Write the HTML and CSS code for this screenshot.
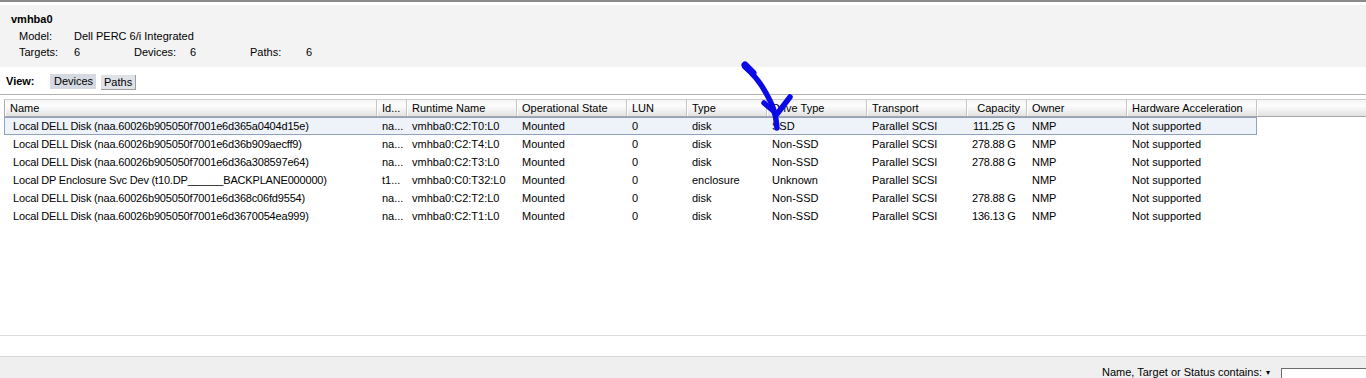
FILE: index.html
```html
<!DOCTYPE html>
<html>
<head>
<meta charset="utf-8">
<link rel="stylesheet" href="styles.css">
</head>
<body>
<div class="page">
  <div class="topline"></div>
  <div class="info">
    <div class="title">vmhba0</div>
    <div class="props">
      <span>Model:</span><span class="wide">Dell PERC 6/i Integrated</span>
      <span>Targets:</span><span>6</span><span>Devices:</span><span>6</span><span>Paths:</span><span>6</span>
    </div>
  </div>
  <div class="view">
    <span class="view-label">View:</span>
    <span class="btn btn-on">Devices</span>
    <span class="btn btn-off">Paths</span>
  </div>
  <div class="grid">
    <div class="row head">
      <div class="c first">Name</div>
      <div class="c">Id...</div>
      <div class="c">Runtime Name</div>
      <div class="c">Operational State</div>
      <div class="c">LUN</div>
      <div class="c">Type</div>
      <div class="c">Drive Type</div>
      <div class="c">Transport</div>
      <div class="c num">Capacity</div>
      <div class="c">Owner</div>
      <div class="c">Hardware Acceleration</div>
      <div class="c fill"></div>
    </div>
    <div class="row data sel">
      <div class="c first">Local DELL Disk (naa.60026b905050f7001e6d365a0404d15e)</div>
      <div class="c">na...</div><div class="c">vmhba0:C2:T0:L0</div><div class="c">Mounted</div><div class="c">0</div><div class="c">disk</div><div class="c">SSD</div><div class="c">Parallel SCSI</div><div class="c num">111.25 G</div><div class="c">NMP</div><div class="c">Not supported</div>
    </div>
    <div class="row data">
      <div class="c first">Local DELL Disk (naa.60026b905050f7001e6d36b909aecff9)</div>
      <div class="c">na...</div><div class="c">vmhba0:C2:T4:L0</div><div class="c">Mounted</div><div class="c">0</div><div class="c">disk</div><div class="c">Non-SSD</div><div class="c">Parallel SCSI</div><div class="c num">278.88 G</div><div class="c">NMP</div><div class="c">Not supported</div>
    </div>
    <div class="row data">
      <div class="c first">Local DELL Disk (naa.60026b905050f7001e6d36a308597e64)</div>
      <div class="c">na...</div><div class="c">vmhba0:C2:T3:L0</div><div class="c">Mounted</div><div class="c">0</div><div class="c">disk</div><div class="c">Non-SSD</div><div class="c">Parallel SCSI</div><div class="c num">278.88 G</div><div class="c">NMP</div><div class="c">Not supported</div>
    </div>
    <div class="row data">
      <div class="c first">Local DP Enclosure Svc Dev (t10.DP______BACKPLANE000000)</div>
      <div class="c">t1...</div><div class="c">vmhba0:C0:T32:L0</div><div class="c">Mounted</div><div class="c">0</div><div class="c">enclosure</div><div class="c">Unknown</div><div class="c">Parallel SCSI</div><div class="c num"></div><div class="c">NMP</div><div class="c">Not supported</div>
    </div>
    <div class="row data">
      <div class="c first">Local DELL Disk (naa.60026b905050f7001e6d368c06fd9554)</div>
      <div class="c">na...</div><div class="c">vmhba0:C2:T2:L0</div><div class="c">Mounted</div><div class="c">0</div><div class="c">disk</div><div class="c">Non-SSD</div><div class="c">Parallel SCSI</div><div class="c num">278.88 G</div><div class="c">NMP</div><div class="c">Not supported</div>
    </div>
    <div class="row data">
      <div class="c first">Local DELL Disk (naa.60026b905050f7001e6d3670054ea999)</div>
      <div class="c">na...</div><div class="c">vmhba0:C2:T1:L0</div><div class="c">Mounted</div><div class="c">0</div><div class="c">disk</div><div class="c">Non-SSD</div><div class="c">Parallel SCSI</div><div class="c num">136.13 G</div><div class="c">NMP</div><div class="c">Not supported</div>
    </div>
  </div>
  <div class="blank"></div>
  <div class="filterbar">
    <span class="filter-label">Name, Target or Status contains:</span>
    <span class="caret">&#9662;</span>
    <span class="search"></span>
  </div>
  <svg class="arrow" width="1366" height="378" viewBox="0 0 1366 378">
    <path d="M745 67 C 751 72, 760 82, 766 93 S 776 112, 777 128" fill="none" stroke="#0a0ae8" stroke-width="5.5" stroke-linecap="round" stroke-linejoin="round"/>
    <path d="M745 65 L 753 73" fill="none" stroke="#0a0ae8" stroke-width="7" stroke-linecap="round"/>
    <path d="M764 103 L 777 114 L 790 97" fill="none" stroke="#0a0ae8" stroke-width="5.5" stroke-linecap="round" stroke-linejoin="round"/>
  </svg>
</div>
</body>
</html>
```
FILE: styles.css
```css
body {
  margin: 0;
  background: #fff;
  color: #000;
  font: 11px "Liberation Sans", Arial, sans-serif;
}

.page {
  position: relative;
  width: 1366px;
  height: 378px;
  overflow: hidden;
  display: flex;
  flex-direction: column;
}

.topline {
  flex: none;
  height: 2px;
  background: #8a8a8a;
  margin-bottom: 3px;
}

.info {
  flex: none;
  height: 62px;
  box-sizing: border-box;
  background: #f3f3f3;
  padding: 8px 0 0 11px;
}

.title {
  font-weight: bold;
  line-height: 13px;
  margin-bottom: 2px;
}

.props {
  display: grid;
  grid-template-columns: 55px 60px 56px 60px 56px auto;
  line-height: 16px;
  padding-left: 8px;
}

.props .wide {
  grid-column: 2 / span 5;
}

.view {
  flex: none;
  height: 28px;
  box-sizing: border-box;
  border-bottom: 1px solid #b2b2b2;
  display: flex;
  align-items: flex-start;
  padding: 7px 0 0 6px;
  margin-bottom: 4px;
}

.view-label {
  font-weight: bold;
  line-height: 15px;
  width: 44px;
}

.btn {
  height: 15px;
  line-height: 15px;
  box-sizing: border-box;
}

.btn-on {
  background: #d5d9e1;
  padding: 0 4px;
  width: 46px;
}

.btn-off {
  margin-left: 5px;
  margin-top: 1px;
  background: #dfe2e7;
  padding: 0 3px;
  width: 35px;
  line-height: 14px;
  border-right: 1px solid #9c9c9c;
  border-bottom: 1px solid #9c9c9c;
}

.grid {
  flex: 1;
}

.row {
  display: grid;
  grid-template-columns: 373px 30px 110px 110px 60px 80px 100px 100px 60px 100px 130px;
  margin-left: 4px;
}

.head {
  grid-template-columns: 373px 30px 110px 110px 60px 80px 100px 100px 60px 100px 130px 1fr;
  height: 18px;
  box-sizing: border-box;
  border-top: 1px solid #cdcdcd;
  border-bottom: 1px solid #a8a8a8;
  background: linear-gradient(#f4f4f4, #fdfdfd 35%, #e2e2e2);
}

.c {
  padding-left: 5px;
  white-space: nowrap;
  overflow: hidden;
}

.head .c {
  line-height: 16px;
  border-right: 1px solid #c6c6c6;
  box-shadow: inset 1px 0 #fff;
}

.head .first {
  border-left: 1px solid #a8a8a8;
  padding-left: 5px;
}

.head .fill {
  border-right: none;
}

.head .num {
  text-align: right;
  padding-right: 6px;
}

.data {
  width: 1253px;
  height: 18px;
}

.data .c {
  line-height: 17px;
  padding-top: 1px;
}

.data .first {
  padding-left: 9px;
  letter-spacing: -0.18px;
}

.data .num {
  text-align: right;
  padding-right: 12px;
  letter-spacing: -0.2px;
}

.sel {
  background: #eef3fa;
  outline: 1px solid #8fa3c1;
  outline-offset: -1px;
}

.blank {
  flex: none;
  height: 21px;
  box-sizing: border-box;
  border-top: 1px solid #dcdcdc;
}

.filterbar {
  flex: none;
  height: 22px;
  box-sizing: border-box;
  border-top: 1px solid #d6d6d6;
  background: #efefef;
  display: flex;
  justify-content: flex-end;
  align-items: flex-start;
  padding-top: 10px;
  line-height: 11px;
}

.filter-label {
  line-height: 11px;
}

.caret {
  margin-left: 4px;
  font-size: 8px;
  line-height: 11px;
}

.search {
  margin-left: 11px;
  margin-top: 1px;
  width: 85px;
  height: 14px;
  box-sizing: border-box;
  background: #fff;
  border-top: 1px solid #6c6c6c;
  border-left: 1px solid #6c6c6c;
}

.arrow {
  position: absolute;
  left: 0;
  top: 0;
  pointer-events: none;
}
```
